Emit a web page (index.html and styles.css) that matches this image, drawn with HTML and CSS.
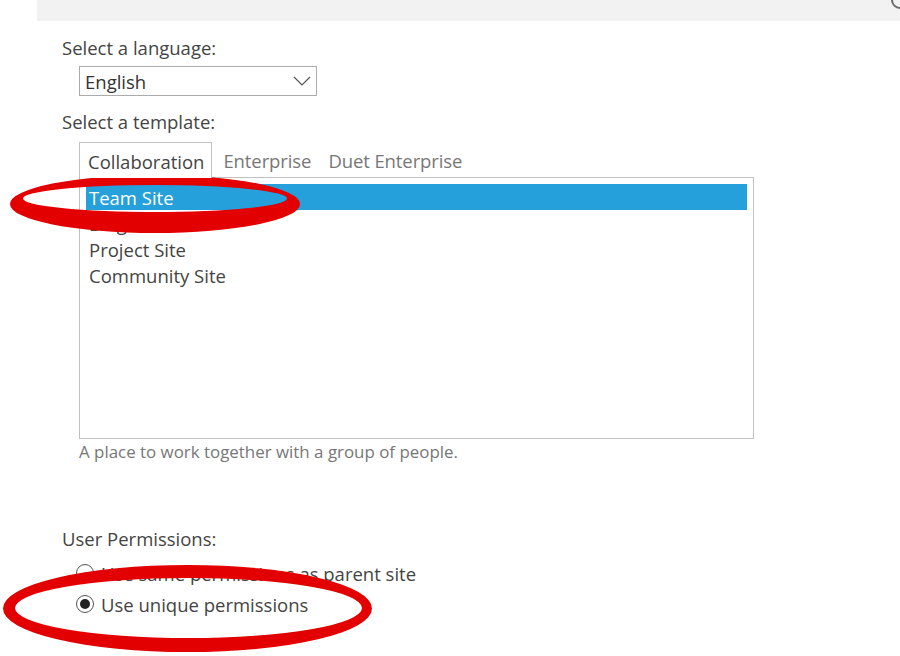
FILE: index.html
```html
<!DOCTYPE html>
<html lang="en">
<head>
<meta charset="utf-8">
<title>New Site</title>
<link rel="stylesheet" href="styles.css">
</head>
<body>
<div class="topbar">
  <svg class="topbar-icon" width="12" height="12" viewBox="0 0 12 12"><circle cx="12" cy="0" r="8" fill="none" stroke="#6b6b6b" stroke-width="2"/></svg>
</div>
<main class="content">
  <div class="label">Select a language:</div>
  <div class="select">
    <span class="select-value">English</span>
    <svg class="chevron" width="18" height="10" viewBox="0 0 18 10"><path d="M1 1 L9 9 L17 1" fill="none" stroke="#555" stroke-width="1.2"/></svg>
  </div>
  <div class="label label-template">Select a template:</div>
  <div class="tabs">
    <div class="tab tab-active">Collaboration</div>
    <div class="tab">Enterprise</div>
    <div class="tab">Duet Enterprise</div>
  </div>
  <div class="listbox">
    <div class="item item-selected">Team Site</div>
    <div class="item">Blog</div>
    <div class="item">Project Site</div>
    <div class="item">Community Site</div>
  </div>
  <div class="desc">A place to work together with a group of people.</div>
  <div class="label label-perm">User Permissions:</div>
  <div class="radios">
    <div class="radio-row"><span class="radio"></span><span>Use same permissions as parent site</span></div>
    <div class="radio-row"><span class="radio radio-on"></span><span>Use unique permissions</span></div>
  </div>
</main>
<svg class="marks" width="900" height="656" viewBox="0 0 900 656">
  <path fill="#e30000" fill-rule="evenodd" d="M10 204 A145 29 0 1 0 300 204 A145 29 0 1 0 10 204 Z M23 198.5 A132 13.5 0 1 1 287 198.5 A132 13.5 0 1 1 23 198.5 Z"/>
  <path fill="#e30000" fill-rule="evenodd" d="M3 608.5 A184.5 43.5 0 1 0 372 608.5 A184.5 43.5 0 1 0 3 608.5 Z M15 608 A173.5 30 0 1 1 362 608 A173.5 30 0 1 1 15 608 Z"/>
</svg>
</body>
</html>
```
FILE: styles.css
```css
html, body {
  margin: 0;
  padding: 0;
  background: #fff;
}
body {
  width: 900px;
  height: 656px;
  overflow: hidden;
  position: relative;
  font-family: "Open Sans", "Noto Sans", sans-serif;
  color: #444;
}
.topbar {
  height: 21px;
  margin-left: 37px;
  background: #f2f2f2;
  position: relative;
}
.topbar-icon {
  position: absolute;
  right: 0;
  top: 0;
}
.content {
  padding: 17px 0 0 62px;
}
.label {
  font-size: 18.5px;
  line-height: 20px;
  height: 20px;
  white-space: nowrap;
}
.select {
  margin: 8px 0 0 17px;
  width: 238px;
  height: 30px;
  box-sizing: border-box;
  border: 1px solid #ababab;
  display: flex;
  align-items: center;
  justify-content: space-between;
  padding: 0 5px 0 5px;
  font-size: 18.5px;
  color: #333;
}
.label-template {
  margin-top: 16px;
}
.tabs {
  margin: 10px 0 0 17px;
  display: flex;
  height: 35px;
  font-size: 18.5px;
}
.tab {
  padding: 0 7px 0 10px;
  line-height: 38px;
  color: #777;
  white-space: nowrap;
  letter-spacing: -0.1px;
}
.tab-active {
  padding: 0 7px 0 8px;
  border: 1px solid #c1c1c1;
  border-bottom: none;
  background: #fff;
  color: #444;
  height: 36px;
  line-height: 37px;
  box-sizing: border-box;
  position: relative;
  z-index: 1;
  margin-right: 1px;
  letter-spacing: 0;
}
.listbox {
  margin-left: 17px;
  width: 675px;
  height: 262px;
  box-sizing: border-box;
  border: 1px solid #c1c1c1;
  padding: 6px;
  font-size: 18.5px;
}
.item {
  height: 26px;
  line-height: 27px;
  padding-left: 3px;
  color: #444;
}
.item-selected {
  background: #25a0da;
  color: #fff;
}
.desc {
  margin: 3px 0 0 17px;
  font-size: 16.9px;
  line-height: 20px;
  color: #777;
  white-space: nowrap;
}
.label-perm {
  margin-top: 67px;
}
.radios {
  margin: 9px 0 0 14px;
  display: flex;
  flex-direction: column;
  gap: 1px;
}
.radio-row {
  display: flex;
  align-items: center;
  gap: 7px;
  height: 30px;
  font-size: 18.5px;
  color: #444;
  white-space: nowrap;
}
.radio {
  width: 18px;
  height: 18px;
  flex: none;
  box-sizing: border-box;
  border: 1.5px solid #555;
  border-radius: 50%;
  display: flex;
  align-items: center;
  justify-content: center;
}
.radio-on::after {
  content: "";
  width: 10px;
  height: 10px;
  border-radius: 50%;
  background: #222;
}
.marks {
  position: absolute;
  left: 0;
  top: 0;
  pointer-events: none;
}
```
